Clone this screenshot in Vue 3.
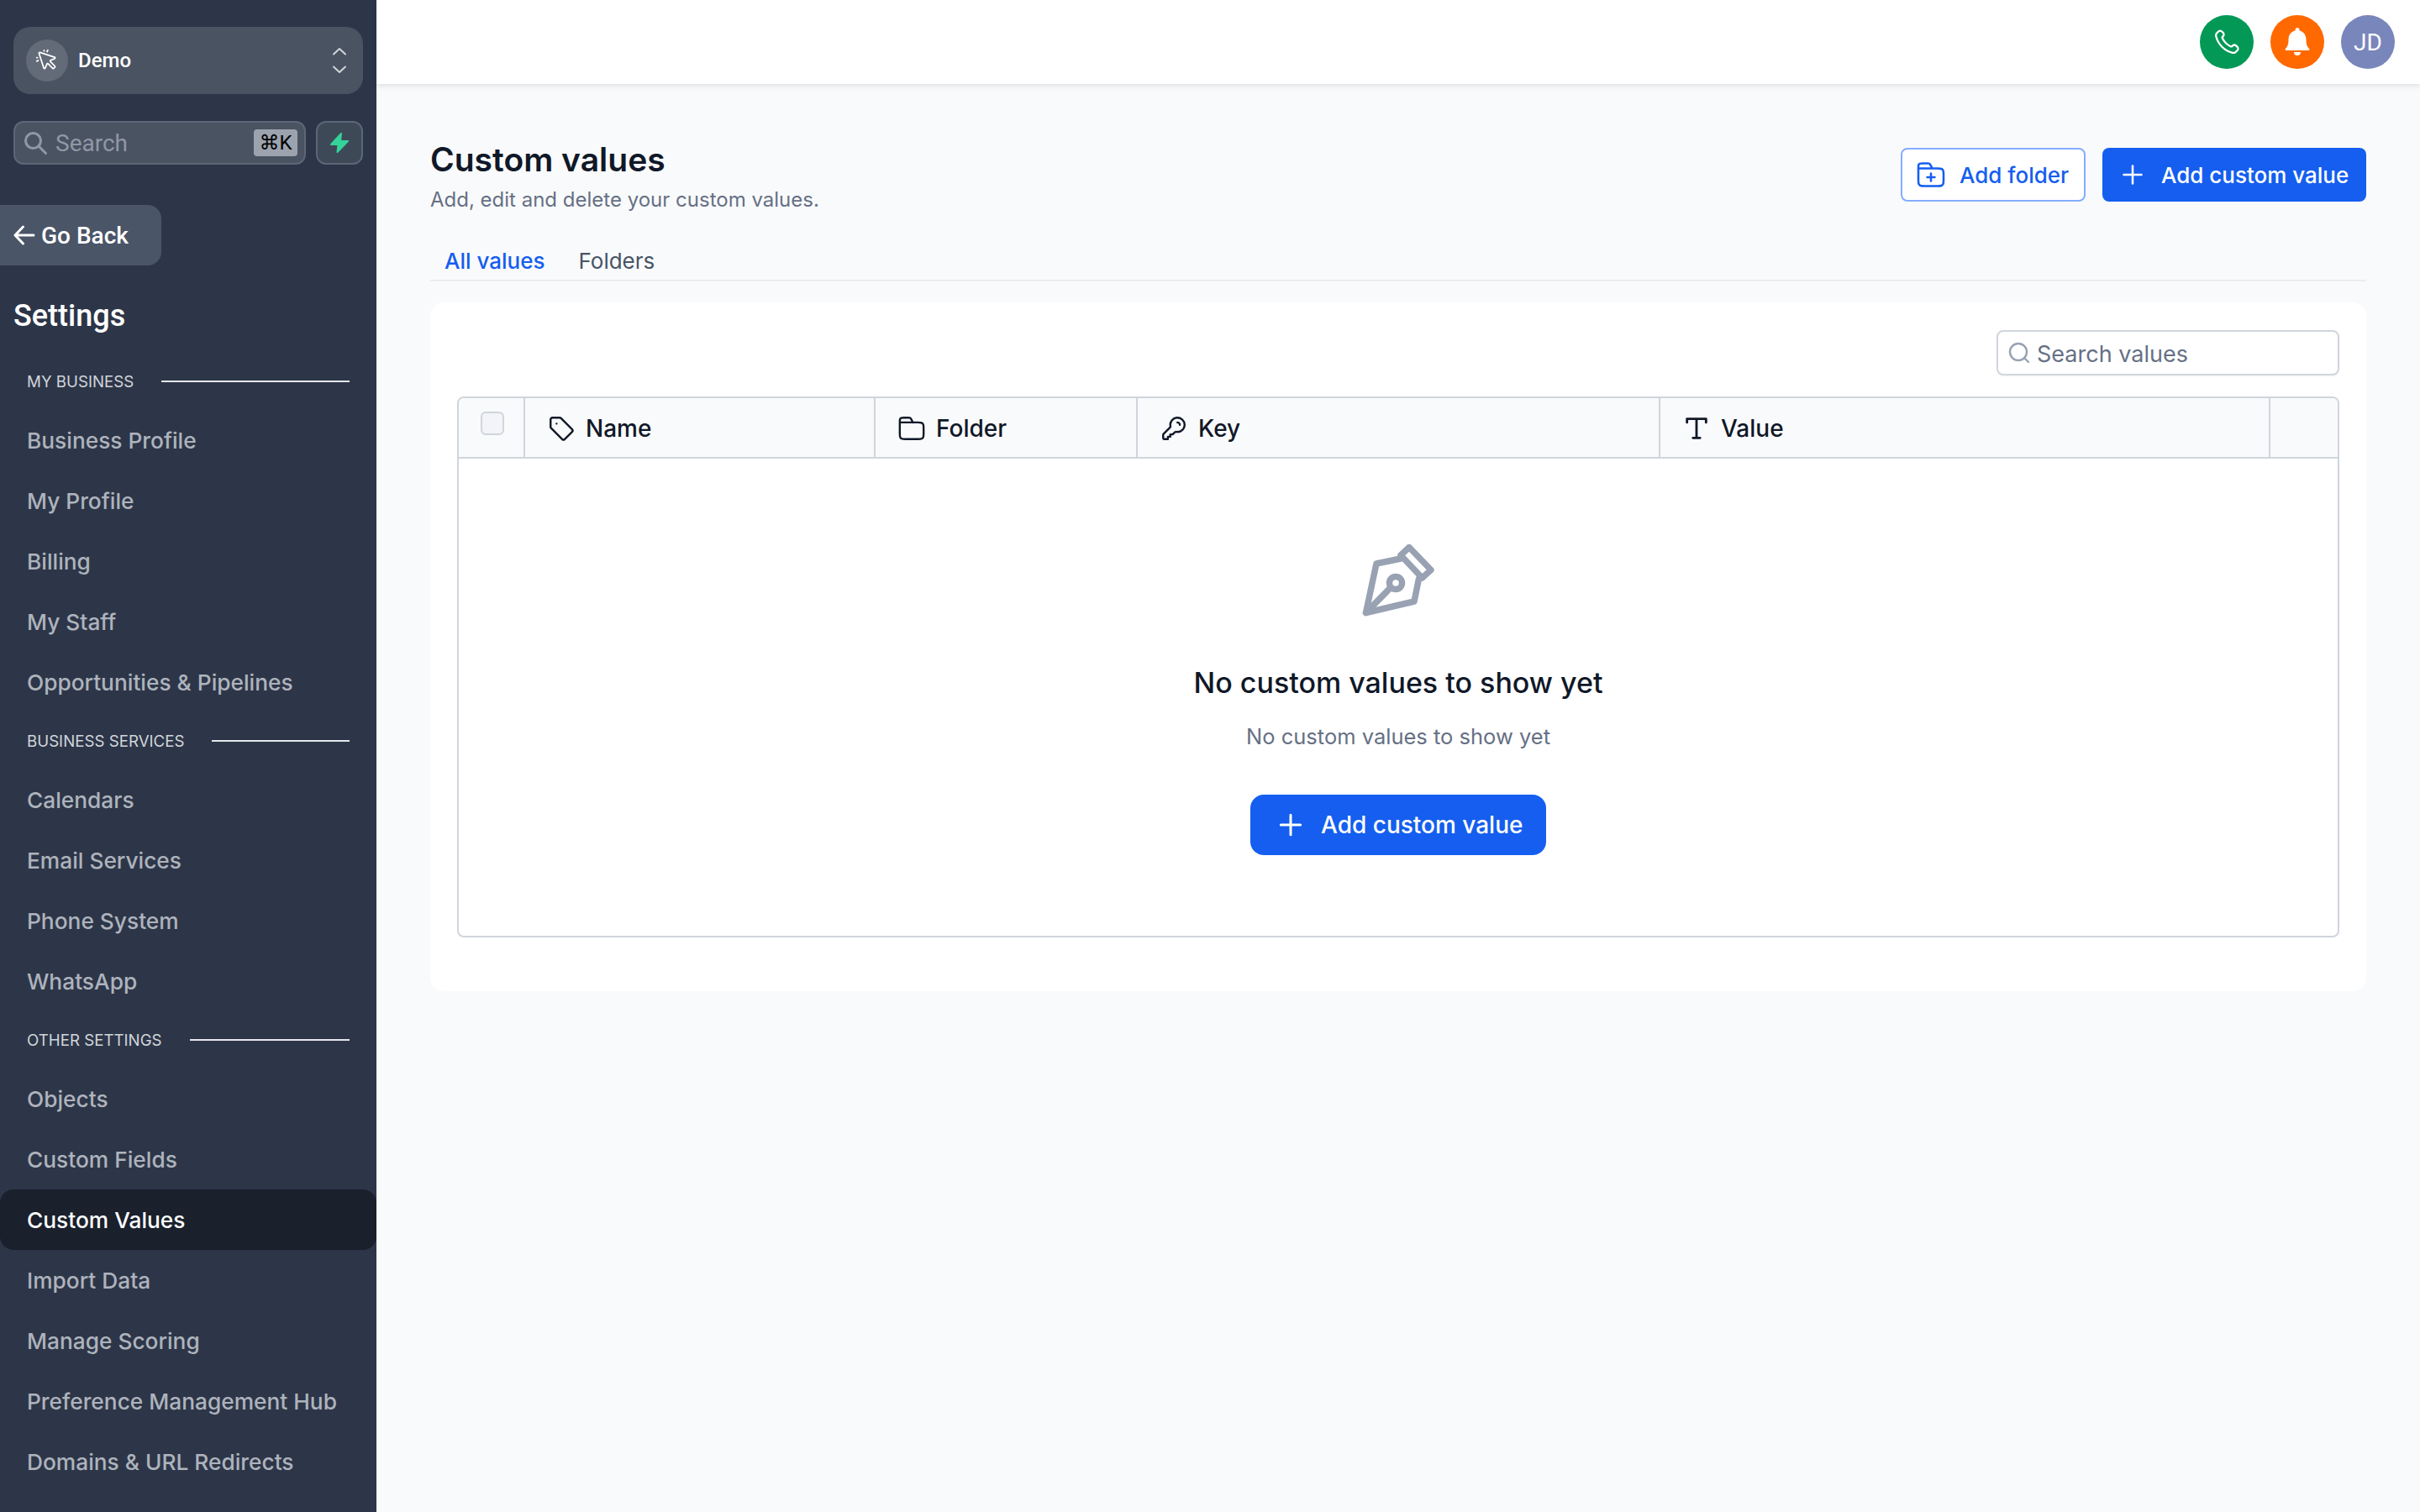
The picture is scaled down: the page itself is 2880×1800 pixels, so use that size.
<script setup>
const sections = [
  { title: 'MY BUSINESS', items: ['Business Profile', 'My Profile', 'Billing', 'My Staff', 'Opportunities & Pipelines'] },
  { title: 'BUSINESS SERVICES', items: ['Calendars', 'Email Services', 'Phone System', 'WhatsApp'] },
  { title: 'OTHER SETTINGS', items: ['Objects', 'Custom Fields', 'Custom Values', 'Import Data', 'Manage Scoring', 'Preference Management Hub', 'Domains & URL Redirects'] },
]
const plus = 'M12 5v14M5 12h14'
</script>

<template>
  <div class="app">
    <aside class="sidebar">
      <div class="top">
        <div class="account">
          <span class="account-icon">
            <svg width="28" height="28" viewBox="0 0 256 256" fill="#fff"><path d="M169.64,134.33l44.77-19.46A16,16,0,0,0,213,85.07L52.92,32.8A16,16,0,0,0,32.8,52.92L85.07,213a15.83,15.83,0,0,0,14.41,11l.79,0a15.83,15.83,0,0,0,14.6-9.59h0l19.46-44.77L184,219.31a16,16,0,0,0,22.63,0l12.68-12.68a16,16,0,0,0,0-22.63Zm-69.48,73.76.06-.05Zm95.15-.09-49.66-49.67a16,16,0,0,0-26,4.94l-19.42,44.65L48,48l159.87,52.21-44.64,19.41a16,16,0,0,0-4.94,26L208,195.31ZM88,24V16a8,8,0,0,1,16,0v8a8,8,0,0,1-16,0ZM8,96a8,8,0,0,1,8-8h8a8,8,0,0,1,0,16H16A8,8,0,0,1,8,96ZM120.85,28.42l8-16a8,8,0,0,1,14.31,7.16l-8,16a8,8,0,1,1-14.31-7.16Zm-81.69,96a8,8,0,0,1-3.58,10.74l-16,8a8,8,0,0,1-7.16-14.31l16-8A8,8,0,0,1,39.16,124.42Z"/></svg>
          </span>
          <span class="account-name">Demo</span>
          <svg class="chevrons" width="20" height="32" viewBox="0 0 20 32" fill="none" stroke="#d1d5db" stroke-width="2" stroke-linecap="round" stroke-linejoin="round"><path d="M3 8.5 10 2l7 6.5M3 23.500l7 6.500 7-6.500"/></svg>
        </div>
        <div class="search-row">
          <div class="side-search">
            <svg width="28" height="28" viewBox="0 0 28 28" fill="none" stroke="#8f98a6" stroke-width="3" stroke-linecap="round"><circle cx="11.5" cy="11.5" r="9"/><path d="m18 18 8.5 8.5"/></svg>
            <span class="side-search-text">Search</span>
            <kbd class="kbd">⌘K</kbd>
          </div>
          <div class="bolt">
            <svg width="24" height="26" viewBox="0 0 24 26" fill="#34d399" stroke="#34d399" stroke-width="2" stroke-linejoin="round"><path d="M14 2 2 15h8.500L9.500 24 22 11h-9z"/></svg>
          </div>
        </div>
      </div>
      <div class="go-back">
        <svg width="26" height="24" viewBox="0 0 26 24" fill="none" stroke="#fff" stroke-width="3" stroke-linecap="round" stroke-linejoin="round"><path d="M24 12H2M11.500 2 2 12l9.500 10"/></svg>
        <span>Go Back</span>
      </div>
      <h2 class="settings">Settings</h2>
      <nav class="nav">
        <template v-for="s in sections" :key="s.title">
          <div class="section">
            <span>{{ s.title }}</span>
            <i class="rule"></i>
          </div>
          <a v-for="item in s.items" :key="item" class="nav-item" :class="{ active: item === 'Custom Values' }">{{ item }}</a>
        </template>
      </nav>
    </aside>

    <div class="main">
      <header class="topbar">
        <span class="circle green">
          <svg width="34" height="34" viewBox="0 0 24 24" fill="none" stroke="#fff" stroke-width="1.6" stroke-linecap="round" stroke-linejoin="round"><path d="M8.38 8.853a14.603 14.603 0 0 0 2.847 4.01 14.603 14.603 0 0 0 4.01 2.847c.124.06.187.09.265.112.28.082.625.023.862-.147.067-.048.124-.105.239-.219.35-.35.524-.524.7-.639a2 2 0 0 1 2.18 0c.176.115.35.29.7.64l.195.194c.532.531.797.797.942 1.082a2 2 0 0 1 0 1.806c-.145.285-.41.551-.942 1.082l-.157.158c-.53.53-.795.794-1.155.997-.4.224-1.02.386-1.478.384-.413-.001-.695-.081-1.26-.241a19.038 19.038 0 0 1-8.283-4.874A19.039 19.039 0 0 1 3.17 7.761c-.16-.564-.24-.846-.241-1.26a3.377 3.377 0 0 1 .384-1.477c.202-.36.467-.625.997-1.155l.157-.158c.532-.53.798-.797 1.083-.941a2 2 0 0 1 1.805 0c.286.144.551.41 1.083.942l.195.194c.35.35.524.525.638.7a2 2 0 0 1 0 2.18c-.114.177-.289.352-.638.701-.115.115-.172.172-.22.24-.17.237-.228.581-.147.862.023.078.053.14.113.265Z"/></svg>
        </span>
        <span class="circle orange">
          <svg width="30" height="36" viewBox="0 0 30 36" fill="#fff"><path d="M15 1a2.500 2.500 0 0 1 2.500 2.500v1.100C22.700 5.700 25.500 10 25.500 15c0 5.500 1 8.500 3.600 11 .8.800.3 2-.8 2H1.700c-1.100 0-1.600-1.200-.8-2 2.600-2.500 3.600-5.500 3.600-11 0-5 2.800-9.300 8-10.400V3.500A2.500 2.500 0 0 1 15 1Z"/><path d="M11 30h8a4 4 0 0 1-8 0Z"/></svg>
        </span>
        <span class="circle avatar">JD</span>
      </header>

      <main class="content">
        <div class="page-head">
          <div>
            <h1 class="title">Custom values</h1>
            <p class="subtitle">Add, edit and delete your custom values.</p>
          </div>
          <div class="actions">
            <button class="btn outline">
              <svg width="36" height="36" viewBox="0 0 24 24" fill="none" stroke="currentColor" stroke-width="1.700" stroke-linecap="round" stroke-linejoin="round"><path d="m13 7-1.116-2.231c-.32-.642-.481-.963-.72-1.198a2 2 0 0 0-.748-.462C10.100 3 9.740 3 9.022 3H5.200c-1.120 0-1.680 0-2.108.218a2 2 0 0 0-.874.874C2 4.520 2 5.080 2 6.200V7m0 0h15.200c1.680 0 2.520 0 3.162.327a3 3 0 0 1 1.311 1.311C22 9.280 22 10.120 22 11.800v4.400c0 1.680 0 2.520-.327 3.162a3 3 0 0 1-1.311 1.311C19.720 21 18.880 21 17.200 21H6.800c-1.680 0-2.520 0-3.162-.327a3 3 0 0 1-1.311-1.311C2 18.720 2 17.880 2 16.200V7Zm10 10v-6m-3 3h6"/></svg>
              Add folder
            </button>
            <button class="btn primary">
              <svg width="36" height="36" viewBox="0 0 24 24" fill="none" stroke="#fff" stroke-width="1.700" stroke-linecap="round"><path :d="plus"/></svg>
              Add custom value
            </button>
          </div>
        </div>

        <div class="tabs">
          <span class="tab active">All values</span>
          <span class="tab">Folders</span>
        </div>

        <section class="card">
          <div class="toolbar">
            <div class="table-search">
              <svg width="26" height="26" viewBox="0 0 26 26" fill="none" stroke="#98a2b3" stroke-width="2.400" stroke-linecap="round"><circle cx="12" cy="12" r="10"/><path d="m19.500 19.500 4.500 4.500"/></svg>
              <span class="table-search-text">Search values</span>
            </div>
          </div>
          <div class="table">
            <div class="thead">
              <div class="th check"><span class="checkbox"></span></div>
              <div class="th">
                <svg width="34" height="34" viewBox="0 0 24 24" fill="none" stroke="#101828" stroke-width="1.700" stroke-linecap="round" stroke-linejoin="round"><path d="M3 4.500A1.500 1.500 0 0 1 4.500 3h6.200c.4 0 .78.160 1.060.44l9.300 9.300a1.500 1.500 0 0 1 0 2.120l-6.200 6.200a1.500 1.500 0 0 1-2.120 0l-9.300-9.300A1.500 1.500 0 0 1 3 10.700V4.500ZM8 8h.01"/></svg>
                <span>Name</span>
              </div>
              <div class="th">
                <svg width="34" height="34" viewBox="0 0 24 24" fill="none" stroke="#101828" stroke-width="1.700" stroke-linecap="round" stroke-linejoin="round"><path d="m13 7-1.116-2.231c-.32-.642-.481-.963-.72-1.198a2 2 0 0 0-.748-.462C10.100 3 9.740 3 9.022 3H5.200c-1.120 0-1.680 0-2.108.218a2 2 0 0 0-.874.874C2 4.520 2 5.080 2 6.200V7m0 0h15.200c1.680 0 2.520 0 3.162.327a3 3 0 0 1 1.311 1.311C22 9.280 22 10.120 22 11.800v4.400c0 1.680 0 2.520-.327 3.162a3 3 0 0 1-1.311 1.311C19.720 21 18.880 21 17.200 21H6.800c-1.680 0-2.520 0-3.162-.327a3 3 0 0 1-1.311-1.311C2 18.720 2 17.880 2 16.200V7Z"/></svg>
                <span>Folder</span>
              </div>
              <div class="th">
                <svg width="34" height="34" viewBox="0 0 24 24" fill="none" stroke="#101828" stroke-width="1.700" stroke-linecap="round" stroke-linejoin="round"><path d="M17 9c0-.512-.195-1.024-.586-1.414A1.994 1.994 0 0 0 15 7m0 8a6 6 0 1 0-5.946-5.193c.058.434.087.651.068.789a.853.853 0 0 1-.117.346c-.068.121-.187.240-.426.479l-5.110 5.110c-.173.173-.26.260-.322.360a1 1 0 0 0-.12.289C3 17.296 3 17.418 3 17.663V19.400c0 .56 0 .84.109 1.054a1 1 0 0 0 .437.437C3.760 21 4.040 21 4.600 21H7v-2h2v-2h2l1.579-1.579c.239-.239.358-.358.479-.426a.853.853 0 0 1 .346-.117c.138-.02.355.01.789.068.264.036.533.054.807.054Z"/></svg>
                <span>Key</span>
              </div>
              <div class="th">
                <svg width="34" height="34" viewBox="0 0 24 24" fill="none" stroke="#101828" stroke-width="2" stroke-linecap="round" stroke-linejoin="round"><path d="M4 7V4h16v3M9 20h6M12 4v16"/></svg>
                <span>Value</span>
              </div>
              <div class="th last"></div>
            </div>
            <div class="empty">
              <svg class="pen" width="86" height="86" viewBox="0 0 86 86" fill="none" stroke="#98a2b3" stroke-width="7.500" stroke-linecap="round" stroke-linejoin="round">
                <path d="M4.500 81.500 17 23l29-6M4.500 81.500 62 68l5.500-27M4.500 81.500 33 52.500"/>
                <path d="M46 13 56 3.500 82 30.500 71.500 40Z"/>
                <circle cx="40" cy="46" r="7.500"/>
              </svg>
              <h3 class="empty-title">No custom values to show yet</h3>
              <p class="empty-sub">No custom values to show yet</p>
              <button class="btn primary big">
                <svg width="40" height="40" viewBox="0 0 24 24" fill="none" stroke="#fff" stroke-width="1.800" stroke-linecap="round"><path :d="plus"/></svg>
                Add custom value
              </button>
            </div>
          </div>
        </section>
      </main>
    </div>
  </div>
</template>

<style>
html, body { margin: 0; background: #f9fafb; }
</style>

<style scoped>
.app { display: flex; width: 2880px; height: 1800px; overflow: hidden; font-family: Inter, "Noto Sans", sans-serif; background: #f9fafb; }

.sidebar { width: 448px; flex: none; background: #2d3648; color: #fff; display: flex; flex-direction: column; }
.top { padding: 32px 16px 0; display: flex; flex-direction: column; gap: 32px; }
.account { height: 80px; box-sizing: border-box; padding: 0 18px 0 15px; background: #4a5361; border-radius: 20px; display: flex; align-items: center; gap: 12px; }
.account-icon { width: 50px; height: 50px; border-radius: 50%; background: #636b78; display: flex; align-items: center; justify-content: center; }
.account-name { flex: 1; font: 500 24px Roboto, sans-serif; }
.search-row { display: flex; gap: 12px; }
.side-search { flex: 1; height: 52px; box-sizing: border-box; border: 2px solid #5c6676; border-radius: 12px; background: #4a5361; display: flex; align-items: center; padding: 0 8px 0 10px; }
.side-search-text { flex: 1; margin-left: 10px; font: 400 28px Roboto, sans-serif; color: #8f98a6; }
.kbd { width: 52px; height: 32px; border-radius: 4px; background: #9ca3af; color: #000; display: flex; align-items: center; justify-content: center; font: 400 24px Roboto, "DejaVu Sans", sans-serif; }
.bolt { width: 56px; height: 52px; box-sizing: border-box; border: 2px solid #5c6676; border-radius: 12px; background: #3e4958; display: flex; align-items: center; justify-content: center; }

.go-back { margin-top: 48px; width: 192px; height: 72px; box-sizing: border-box; padding-left: 16px; background: #4a5568; border-radius: 0 16px 16px 0; display: flex; align-items: center; gap: 7px; font: 500 28px Roboto, sans-serif; }
.settings { margin: 38px 0 0; padding-left: 16px; height: 44px; font: 500 36px/44px Roboto, sans-serif; }
.nav { margin-top: 22px; display: flex; flex-direction: column; }
.section { height: 68px; padding: 0 32px; display: flex; align-items: center; gap: 33px; font: 400 18.700px Inter, sans-serif; color: #d1d5db; }
.rule { flex: 1; height: 2px; background: #e5e7eb; }
.nav-item { height: 72px; padding-left: 32px; display: flex; align-items: center; font: 500 26.300px Inter, sans-serif; color: #aeb3bd; border-radius: 16px; }
.nav-item.active { background: #1a202c; color: #fff; }

.main { flex: 1; min-width: 0; display: flex; flex-direction: column; }
.topbar { height: 100px; flex: none; background: #fff; box-shadow: 0 2px 6px rgba(16, 24, 40, .12); display: flex; align-items: flex-start; justify-content: flex-end; gap: 20px; padding: 18px 30px 0 0; box-sizing: border-box; position: relative; }
.circle { width: 64px; height: 64px; border-radius: 50%; display: flex; align-items: center; justify-content: center; }
.green { background: #039855; }
.orange { background: #ff6900; }
.avatar { background: #7986bb; color: #fff; font: 400 28px Roboto, sans-serif; }

.content { padding: 66px 64px 0; }
.page-head { display: flex; justify-content: space-between; align-items: flex-start; }
.title { margin: 0; font: 600 39px/48px Inter, sans-serif; color: #101828; }
.subtitle { margin: 8px 0 0; font: 400 24px/32px Inter, sans-serif; color: #667085; }
.actions { display: flex; gap: 20px; margin-top: 10px; }
.btn { height: 64px; box-sizing: border-box; border-radius: 8px; display: flex; align-items: center; gap: 16px; font: 500 26px Inter, sans-serif; cursor: pointer; white-space: nowrap; }
.outline { width: 220px; padding: 0 0 0 16px; background: #fff; border: 2px solid #84adff; color: #155eef; }
.primary { width: 314px; padding: 0 0 0 18px; background: #155eef; border: 0; color: #fff; }
.big { width: 352px; height: 72px; border-radius: 16px; padding-left: 28px; font-size: 28px; margin-top: 51px; gap: 16px; }

.tabs { margin-top: 33px; display: flex; gap: 6px; height: 46px; border-bottom: 2px solid #eaecf0; }
.tab { padding: 0 17px; font: 400 26px/48px Inter, sans-serif; color: #475467; }
.tab.active { color: #155eef; font-weight: 500; }

.card { margin-top: 25px; background: #fff; border-radius: 16px; padding: 33px 32px 64px 32px; }
.toolbar { display: flex; justify-content: flex-end; }
.table-search { width: 408px; height: 54px; box-sizing: border-box; border: 2px solid #d0d5dd; border-radius: 8px; display: flex; align-items: center; gap: 8px; padding-left: 12px; font: 400 27px Inter, sans-serif; color: #667085; box-shadow: 0 1px 2px rgba(16, 24, 40, .05); }
.table-search-text { padding-top: 2px; }
.table { margin-top: 25px; border: 2px solid #d0d5dd; border-radius: 8px; overflow: hidden; }
.thead { display: grid; grid-template-columns: 79px 417px 312px 622px 726px 1fr; height: 72px; box-sizing: border-box; background: #f9fafb; border-bottom: 2px solid #d0d5dd; }
.th { display: flex; align-items: center; gap: 12px; padding: 1px 0 0 26px; border-right: 2px solid #d0d5dd; font: 500 28px Inter, sans-serif; color: #101828; }
.th.check { padding: 0 0 0 26px; align-items: flex-start; }
.th.last { border-right: 0; }
.checkbox { margin-top: 16px; width: 28px; height: 28px; box-sizing: border-box; border: 2px solid #d0d5dd; border-radius: 6px; background: #f2f4f7; }
.empty { height: 568px; box-sizing: border-box; padding-top: 102px; display: flex; flex-direction: column; align-items: center; }
.pen { display: block; }
.empty-title { margin: 57px 0 0; font: 500 34px/44px Inter, sans-serif; color: #101828; }
.empty-sub { margin: 24px 0 0; font: 400 25.500px/36px Inter, sans-serif; color: #667085; }
</style>
